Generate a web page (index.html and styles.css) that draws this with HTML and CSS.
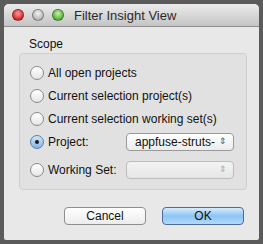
FILE: index.html
```html
<html>
<head>
<meta charset="UTF-8">
<title>Filter Insight View</title>
<link rel="stylesheet" href="styles.css">
</head>
<body>
<div class="window">
    <div class="titlebar">
        <span class="light red"></span>
        <span class="light gray"></span>
        <span class="light green"></span>
        <span class="title">Filter Insight View</span>
    </div>
    <div class="content">
        <div class="legend">Scope</div>
        <div class="group">
            <div class="row"><span class="radio"></span>All open projects</div>
            <div class="row"><span class="radio"></span>Current selection project(s)</div>
            <div class="row"><span class="radio"></span>Current selection working set(s)</div>
            <div class="row">
                <span class="radio on"></span><span class="lbl">Project:</span>
                <span class="popup">appfuse-struts-<span class="arrows">&#8661;</span></span>
            </div>
            <div class="row last">
                <span class="radio"></span><span class="lbl">Working Set:</span>
                <span class="popup off"><span class="arrows">&#8661;</span></span>
            </div>
        </div>
        <div class="buttons">
            <button class="btn">Cancel</button>
            <button class="btn default">OK</button>
        </div>
    </div>
</div>
</body>
</html>
```

FILE: styles.css
```css
body {
    margin: 0;
    padding: 4px;
    background-color: #5b5b5b;
    font-family: "Liberation Sans", Arial, sans-serif;
    font-size: 12px;
    color: #111;
}
.window {
    width: 255px;
    height: 236px;
    background-color: #e8e8e8;
    border-radius: 5px 5px 2px 2px;
    overflow: hidden;
}
.titlebar {
    height: 22px;
    display: flex;
    align-items: center;
    padding-left: 8px;
    background: linear-gradient(#ebebeb, #c4c4c4);
    border-bottom: 1px solid #8f8f8f;
}
.light {
    width: 12px;
    height: 12px;
    border-radius: 50%;
    margin-right: 8px;
    box-sizing: border-box;
    border: 1px solid rgba(0,0,0,0.35);
}
.red { background: radial-gradient(circle at 50% 35%, #ff9a9a, #d42a2a 70%); }
.gray { background: radial-gradient(circle at 50% 35%, #f2f2f2, #b8b8b8 70%); }
.green { background: radial-gradient(circle at 50% 35%, #c7f2a8, #58b23a 70%); }
.title {
    margin-left: 2px;
    font-size: 13px;
    color: #2a2a2a;
}
.content {
    padding: 10px 12px 0 15px;
}
.legend {
    padding-left: 10px;
    font-size: 12px;
    margin-bottom: 2px;
}
.group {
    border: 1px solid #cfcfcf;
    background-color: #e1e1e1;
    border-radius: 4px;
    padding: 7px 0 8px 10px;
}
.row {
    display: flex;
    align-items: center;
    height: 23px;
    white-space: nowrap;
}
.row.last {
    margin-top: 5px;
}
.radio {
    width: 12px;
    height: 12px;
    border-radius: 50%;
    border: 1px solid #8a8a8a;
    background: linear-gradient(#ffffff, #e6e6e6);
    margin-right: 4px;
    position: relative;
}
.radio.on {
    background: linear-gradient(#d2e6fa, #84b4e8);
    border-color: #5e7ea6;
}
.radio.on::after {
    content: "";
    position: absolute;
    left: 4px;
    top: 4px;
    width: 4px;
    height: 4px;
    border-radius: 50%;
    background: #1a1a1a;
}
.lbl {
    width: 78px;
}
.popup {
    width: 108px;
    height: 18px;
    box-sizing: border-box;
    border: 1px solid #9a9a9a;
    border-radius: 4px;
    background: linear-gradient(#ffffff, #ececec);
    display: flex;
    align-items: center;
    padding-left: 8px;
    position: relative;
}
.popup.off {
    background: linear-gradient(#f3f3f3, #e6e6e6);
    border-color: #bdbdbd;
}
.arrows {
    position: absolute;
    right: 6px;
    top: 2px;
    font-size: 9px;
    color: #555;
}
.popup.off .arrows { color: #aaa; }
.buttons {
    display: flex;
    justify-content: flex-end;
    gap: 16px;
    margin-top: 17px;
    padding-right: 3px;
}
.btn {
    width: 82px;
    height: 18px;
    font-family: "Liberation Sans", Arial, sans-serif;
    font-size: 12px;
    color: #111;
    border: 1px solid #8e8e8e;
    border-radius: 4px;
    background: linear-gradient(#ffffff, #ececec);
    padding: 0;
}
.btn.default {
    background: linear-gradient(#d8ecfc, #8cc4f4 50%, #b2dafa);
    border-color: #4e6c9a;
}
```
